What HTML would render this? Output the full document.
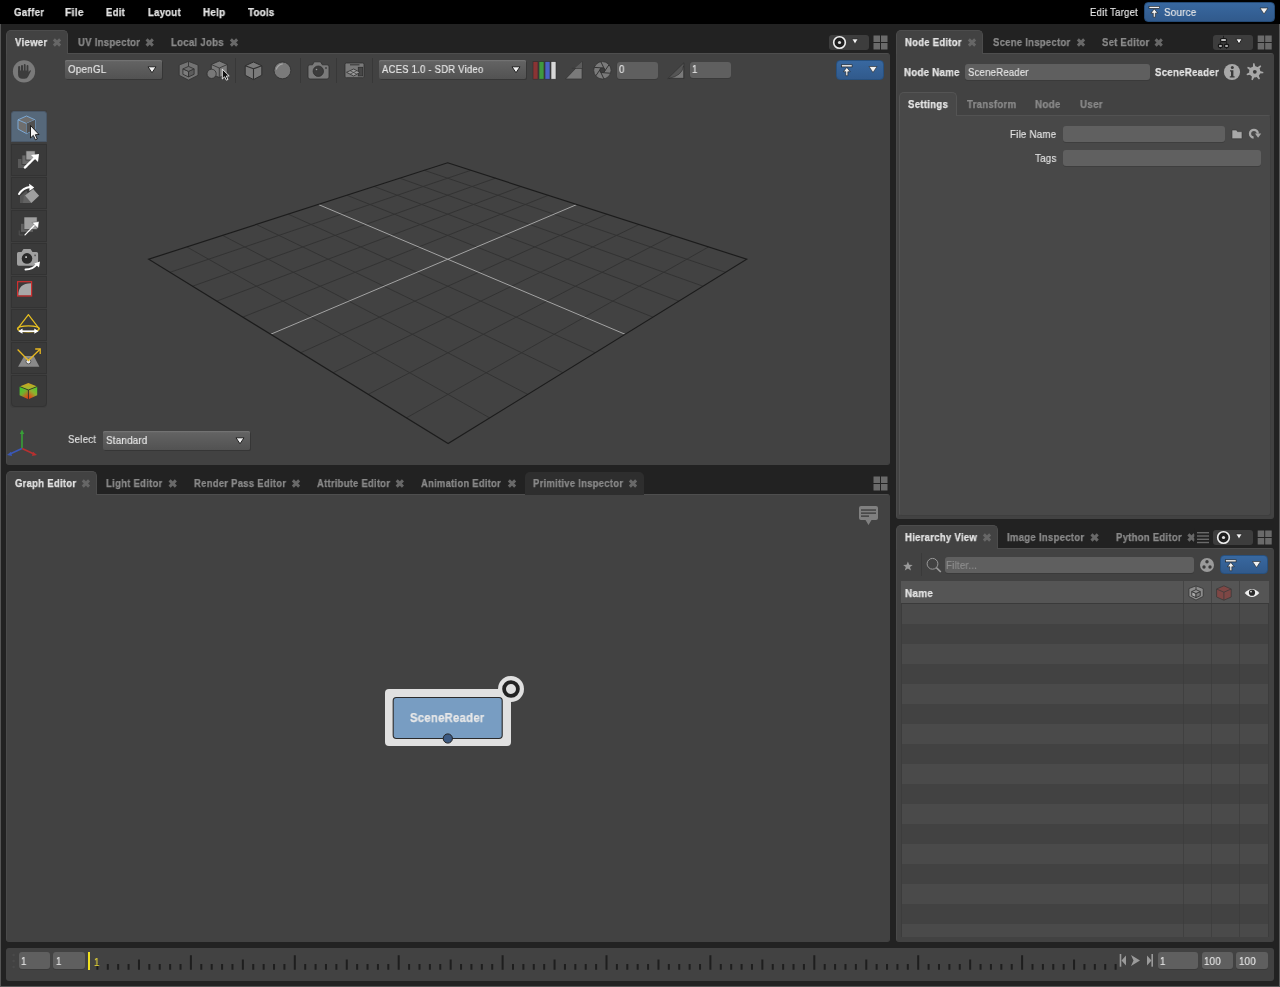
<!DOCTYPE html><html><head><meta charset="utf-8"><style>*{margin:0;padding:0;box-sizing:border-box}
html,body{width:1280px;height:987px;overflow:hidden;background:#222;font-family:"Liberation Sans",sans-serif}
div,svg{position:absolute}
.t{white-space:nowrap;will-change:transform}
</style></head><body><div style="left:0px;top:0px;width:1280px;height:24px;background:#000"></div>
<div style="left:0px;top:24px;width:1px;height:963px;background:#555"></div>
<div style="left:1279px;top:24px;width:1px;height:963px;background:#5a5a5a"></div>
<div style="left:0px;top:986px;width:1280px;height:1px;background:#5a5a5a"></div>
<div class="t" style="left:14.00px;top:5.19px;font-size:11px;line-height:14px;font-weight:bold;color:#e2e2e2;letter-spacing:0.3px;-webkit-text-stroke:0.25px #e2e2e2;transform:scaleX(0.8872);transform-origin:0 0;">Gaffer</div>
<div class="t" style="left:65.30px;top:5.19px;font-size:11px;line-height:14px;font-weight:bold;color:#e2e2e2;letter-spacing:0.3px;-webkit-text-stroke:0.25px #e2e2e2;transform:scaleX(0.9333);transform-origin:0 0;">File</div>
<div class="t" style="left:106.35px;top:5.19px;font-size:11px;line-height:14px;font-weight:bold;color:#e2e2e2;letter-spacing:0.3px;-webkit-text-stroke:0.25px #e2e2e2;transform:scaleX(0.8654);transform-origin:0 0;">Edit</div>
<div class="t" style="left:148.10px;top:5.19px;font-size:11px;line-height:14px;font-weight:bold;color:#e2e2e2;letter-spacing:0.3px;-webkit-text-stroke:0.25px #e2e2e2;transform:scaleX(0.8692);transform-origin:0 0;">Layout</div>
<div class="t" style="left:203.33px;top:5.19px;font-size:11px;line-height:14px;font-weight:bold;color:#e2e2e2;letter-spacing:0.3px;-webkit-text-stroke:0.25px #e2e2e2;transform:scaleX(0.8936);transform-origin:0 0;">Help</div>
<div class="t" style="left:247.91px;top:5.19px;font-size:11px;line-height:14px;font-weight:bold;color:#e2e2e2;letter-spacing:0.3px;-webkit-text-stroke:0.25px #e2e2e2;transform:scaleX(0.8834);transform-origin:0 0;">Tools</div>
<div class="t" style="left:1090.22px;top:4.79px;font-size:11px;line-height:14px;font-weight:normal;color:#e8e8e8;letter-spacing:0.25px;-webkit-text-stroke:0.18px #e8e8e8;transform:scaleX(0.8712);transform-origin:0 0;">Edit Target</div>
<div style="left:1144px;top:2px;width:131px;height:20px;background:linear-gradient(#3868a0,#315a8c);border-radius:4px;border:1px solid #244a75"></div>
<div class="t" style="left:1164.35px;top:4.79px;font-size:11px;line-height:14px;font-weight:normal;color:#e8e8e8;letter-spacing:0.25px;-webkit-text-stroke:0.18px #e8e8e8;transform:scaleX(0.8933);transform-origin:0 0;">Source</div>
<div style="left:6px;top:53px;width:884px;height:412px;background:#424242;border:1px solid #424242;border-left-color:#4a4a4a;border-top-color:#4e4e4e;border-radius:0 3px 3px 3px"></div>
<div style="left:6px;top:30px;width:62px;height:24px;background:#424242;border:1px solid #4c4c4c;border-bottom:none;border-radius:5px 5px 0 0"></div>
<div class="t" style="left:14.91px;top:35.19px;font-size:11px;line-height:14px;font-weight:bold;color:#e4e4e4;letter-spacing:0.3px;-webkit-text-stroke:0.25px #e4e4e4;transform:scaleX(0.8740);transform-origin:0 0;">Viewer</div>
<div class="t" style="left:77.83px;top:35.19px;font-size:11px;line-height:14px;font-weight:bold;color:#8a8a8a;letter-spacing:0.3px;-webkit-text-stroke:0.25px #8a8a8a;transform:scaleX(0.8720);transform-origin:0 0;">UV Inspector</div>
<div class="t" style="left:171.04px;top:35.19px;font-size:11px;line-height:14px;font-weight:bold;color:#8a8a8a;letter-spacing:0.3px;-webkit-text-stroke:0.25px #8a8a8a;transform:scaleX(0.8753);transform-origin:0 0;">Local Jobs</div>
<div style="left:829px;top:35px;width:40px;height:15px;background:#3d3d3d;border-radius:3px"></div>
<div style="left:65px;top:60px;width:97px;height:19px;background:linear-gradient(#6c6c6c,#626262 12%,#525252);border-radius:2px;box-shadow:1px 1px 0 #363636, inset 0 1px 0 #727272"></div>
<div class="t" style="left:67.65px;top:62.49px;font-size:11px;line-height:14px;font-weight:normal;color:#e6e6e6;letter-spacing:0.25px;-webkit-text-stroke:0.18px #e6e6e6;transform:scaleX(0.8915);transform-origin:0 0;">OpenGL</div>
<div style="left:379px;top:60px;width:147px;height:19px;background:linear-gradient(#6c6c6c,#626262 12%,#525252);border-radius:2px;box-shadow:1px 1px 0 #363636, inset 0 1px 0 #727272"></div>
<div class="t" style="left:381.96px;top:62.49px;font-size:11px;line-height:14px;font-weight:normal;color:#e6e6e6;letter-spacing:0.25px;-webkit-text-stroke:0.18px #e6e6e6;transform:scaleX(0.8649);transform-origin:0 0;">ACES 1.0 - SDR Video</div>
<div style="left:617px;top:61.6px;width:41px;height:17px;background:#5f5f5f;border-radius:3px;box-shadow:0 1px 0 #3a3a3a, -0.5px 0 0 #3c3c3c"></div>
<div class="t" style="left:619.20px;top:62.39px;font-size:11px;line-height:14px;font-weight:normal;color:#e6e6e6;letter-spacing:0.25px;-webkit-text-stroke:0.18px #e6e6e6;transform:scaleX(0.8800);transform-origin:0 0;">0</div>
<div style="left:690px;top:62px;width:41px;height:16px;background:#5f5f5f;border-radius:3px;box-shadow:0 1px 0 #3a3a3a, -0.5px 0 0 #3c3c3c"></div>
<div class="t" style="left:691.85px;top:62.39px;font-size:11px;line-height:14px;font-weight:normal;color:#e6e6e6;letter-spacing:0.25px;-webkit-text-stroke:0.18px #e6e6e6;transform:scaleX(0.8800);transform-origin:0 0;">1</div>
<div style="left:836px;top:60px;width:48px;height:20px;background:linear-gradient(#3868a0,#315a8c);border-radius:4px;border:1px solid #27507e"></div>
<div class="t" style="left:68.06px;top:432.19px;font-size:11px;line-height:14px;font-weight:normal;color:#e0e0e0;letter-spacing:0.25px;-webkit-text-stroke:0.18px #e0e0e0;transform:scaleX(0.8800);transform-origin:0 0;">Select</div>
<div style="left:103px;top:431px;width:147px;height:19px;background:linear-gradient(#6c6c6c,#626262 12%,#525252);border-radius:2px;box-shadow:1px 1px 0 #363636, inset 0 1px 0 #727272"></div>
<div class="t" style="left:105.66px;top:433.49px;font-size:11px;line-height:14px;font-weight:normal;color:#e6e6e6;letter-spacing:0.25px;-webkit-text-stroke:0.18px #e6e6e6;transform:scaleX(0.8894);transform-origin:0 0;">Standard</div>
<div style="left:10px;top:110px;width:37px;height:298px;background:#3e3e3e;border-radius:0 0 4px 4px"></div>
<div style="left:11px;top:111px;width:36px;height:31px;background:#56687a;border:1px solid #4a5868;border-radius:3px 3px 0 0"></div>
<div style="left:11px;top:144px;width:36px;height:32px;background:#3a3a3a;border:1px solid #333"></div>
<div style="left:11px;top:177px;width:36px;height:32px;background:#3a3a3a;border:1px solid #333"></div>
<div style="left:11px;top:210px;width:36px;height:32px;background:#3a3a3a;border:1px solid #333"></div>
<div style="left:11px;top:243px;width:36px;height:32px;background:#3a3a3a;border:1px solid #333"></div>
<div style="left:11px;top:276px;width:36px;height:32px;background:#3a3a3a;border:1px solid #333"></div>
<div style="left:11px;top:309px;width:36px;height:32px;background:#3a3a3a;border:1px solid #333"></div>
<div style="left:11px;top:342px;width:36px;height:32px;background:#3a3a3a;border:1px solid #333"></div>
<div style="left:11px;top:375px;width:36px;height:32px;background:#3a3a3a;border:1px solid #333;border-radius:0 0 4px 4px"></div>
<div style="left:6px;top:494px;width:884px;height:448px;background:#424242;border:1px solid #424242;border-left-color:#4a4a4a;border-top-color:#4e4e4e;border-radius:0 3px 3px 3px"></div>
<div style="left:525px;top:471.5px;width:119px;height:23px;background:#2e2e2e;border-radius:5px 5px 0 0"></div>
<div style="left:6px;top:471px;width:91px;height:24px;background:#424242;border:1px solid #4c4c4c;border-bottom:none;border-radius:5px 5px 0 0"></div>
<div class="t" style="left:14.71px;top:476.19px;font-size:11px;line-height:14px;font-weight:bold;color:#e4e4e4;letter-spacing:0.3px;-webkit-text-stroke:0.25px #e4e4e4;transform:scaleX(0.8655);transform-origin:0 0;">Graph Editor</div>
<div class="t" style="left:106.25px;top:476.19px;font-size:11px;line-height:14px;font-weight:bold;color:#8a8a8a;letter-spacing:0.3px;-webkit-text-stroke:0.25px #8a8a8a;transform:scaleX(0.8658);transform-origin:0 0;">Light Editor</div>
<div class="t" style="left:193.55px;top:476.19px;font-size:11px;line-height:14px;font-weight:bold;color:#8a8a8a;letter-spacing:0.3px;-webkit-text-stroke:0.25px #8a8a8a;transform:scaleX(0.8632);transform-origin:0 0;">Render Pass Editor</div>
<div class="t" style="left:317.14px;top:476.19px;font-size:11px;line-height:14px;font-weight:bold;color:#8a8a8a;letter-spacing:0.3px;-webkit-text-stroke:0.25px #8a8a8a;transform:scaleX(0.8560);transform-origin:0 0;">Attribute Editor</div>
<div class="t" style="left:421.34px;top:476.19px;font-size:11px;line-height:14px;font-weight:bold;color:#8a8a8a;letter-spacing:0.3px;-webkit-text-stroke:0.25px #8a8a8a;transform:scaleX(0.8570);transform-origin:0 0;">Animation Editor</div>
<div class="t" style="left:532.85px;top:476.19px;font-size:11px;line-height:14px;font-weight:bold;color:#8a8a8a;letter-spacing:0.3px;-webkit-text-stroke:0.25px #8a8a8a;transform:scaleX(0.8609);transform-origin:0 0;">Primitive Inspector</div>
<div style="left:896px;top:53px;width:378px;height:466px;background:#424242;border:1px solid #424242;border-left-color:#4a4a4a;border-top-color:#4e4e4e;border-radius:0 3px 3px 3px"></div>
<div style="left:896px;top:30px;width:87px;height:24px;background:#424242;border:1px solid #4c4c4c;border-bottom:none;border-radius:5px 5px 0 0"></div>
<div class="t" style="left:904.65px;top:35.19px;font-size:11px;line-height:14px;font-weight:bold;color:#e4e4e4;letter-spacing:0.3px;-webkit-text-stroke:0.25px #e4e4e4;transform:scaleX(0.8649);transform-origin:0 0;">Node Editor</div>
<div class="t" style="left:992.74px;top:35.19px;font-size:11px;line-height:14px;font-weight:bold;color:#8a8a8a;letter-spacing:0.3px;-webkit-text-stroke:0.25px #8a8a8a;transform:scaleX(0.8647);transform-origin:0 0;">Scene Inspector</div>
<div class="t" style="left:1101.64px;top:35.19px;font-size:11px;line-height:14px;font-weight:bold;color:#8a8a8a;letter-spacing:0.3px;-webkit-text-stroke:0.25px #8a8a8a;transform:scaleX(0.8661);transform-origin:0 0;">Set Editor</div>
<div style="left:1213px;top:35px;width:40px;height:15px;background:#3d3d3d;border-radius:3px"></div>
<div class="t" style="left:904.34px;top:64.99px;font-size:11px;line-height:14px;font-weight:bold;color:#e4e4e4;letter-spacing:0.3px;-webkit-text-stroke:0.25px #e4e4e4;transform:scaleX(0.8819);transform-origin:0 0;">Node Name</div>
<div style="left:965.3px;top:63.6px;width:184.7px;height:16.4px;background:#5f5f5f;border-radius:3px;box-shadow:0 1px 0 #3a3a3a"></div>
<div class="t" style="left:967.57px;top:65.19px;font-size:11px;line-height:14px;font-weight:normal;color:#e6e6e6;letter-spacing:0.25px;-webkit-text-stroke:0.18px #e6e6e6;transform:scaleX(0.8683);transform-origin:0 0;">SceneReader</div>
<div class="t" style="left:1154.74px;top:64.99px;font-size:11px;line-height:14px;font-weight:bold;color:#e4e4e4;letter-spacing:0.3px;-webkit-text-stroke:0.25px #e4e4e4;transform:scaleX(0.8761);transform-origin:0 0;">SceneReader</div>
<div style="left:899px;top:115px;width:372px;height:401px;background:#484848;border:1px solid #525252;border-right-color:#3e3e3e;border-bottom-color:#3e3e3e;border-radius:0 3px 3px 3px"></div>
<div style="left:899px;top:92px;width:58px;height:24px;background:#484848;border:1px solid #545454;border-bottom:none;border-radius:5px 5px 0 0"></div>
<div class="t" style="left:907.74px;top:96.99px;font-size:11px;line-height:14px;font-weight:bold;color:#e6e6e6;letter-spacing:0.3px;-webkit-text-stroke:0.25px #e6e6e6;transform:scaleX(0.8760);transform-origin:0 0;">Settings</div>
<div class="t" style="left:966.81px;top:96.99px;font-size:11px;line-height:14px;font-weight:bold;color:#8a8a8a;letter-spacing:0.3px;-webkit-text-stroke:0.25px #8a8a8a;transform:scaleX(0.8736);transform-origin:0 0;">Transform</div>
<div class="t" style="left:1034.93px;top:96.99px;font-size:11px;line-height:14px;font-weight:bold;color:#8a8a8a;letter-spacing:0.3px;-webkit-text-stroke:0.25px #8a8a8a;transform:scaleX(0.8938);transform-origin:0 0;">Node</div>
<div class="t" style="left:1080.02px;top:96.99px;font-size:11px;line-height:14px;font-weight:bold;color:#8a8a8a;letter-spacing:0.3px;-webkit-text-stroke:0.25px #8a8a8a;transform:scaleX(0.8921);transform-origin:0 0;">User</div>
<div class="t" style="left:1009.70px;top:127.19px;font-size:11px;line-height:14px;font-weight:normal;color:#e2e2e2;letter-spacing:0.25px;-webkit-text-stroke:0.18px #e2e2e2;transform:scaleX(0.8847);transform-origin:0 0;">File Name</div>
<div style="left:1062.8px;top:125.5px;width:162.2px;height:16.4px;background:#606060;border-radius:3px;box-shadow:0 1px 0 #3e3e3e"></div>
<div class="t" style="left:1034.78px;top:150.79px;font-size:11px;line-height:14px;font-weight:normal;color:#e2e2e2;letter-spacing:0.25px;-webkit-text-stroke:0.18px #e2e2e2;transform:scaleX(0.8908);transform-origin:0 0;">Tags</div>
<div style="left:1062.8px;top:149.5px;width:198.2px;height:16.5px;background:#606060;border-radius:3px;box-shadow:0 1px 0 #3e3e3e"></div>
<div style="left:896px;top:548px;width:378px;height:394px;background:#424242;border:1px solid #424242;border-left-color:#4a4a4a;border-top-color:#4e4e4e;border-radius:0 3px 3px 3px"></div>
<div style="left:896px;top:525px;width:102px;height:24px;background:#424242;border:1px solid #4c4c4c;border-bottom:none;border-radius:5px 5px 0 0"></div>
<div class="t" style="left:904.55px;top:530.49px;font-size:11px;line-height:14px;font-weight:bold;color:#e4e4e4;letter-spacing:0.3px;-webkit-text-stroke:0.25px #e4e4e4;transform:scaleX(0.8704);transform-origin:0 0;">Hierarchy View</div>
<div class="t" style="left:1007.35px;top:530.49px;font-size:11px;line-height:14px;font-weight:bold;color:#8a8a8a;letter-spacing:0.3px;-webkit-text-stroke:0.25px #8a8a8a;transform:scaleX(0.8705);transform-origin:0 0;">Image Inspector</div>
<div class="t" style="left:1115.55px;top:530.49px;font-size:11px;line-height:14px;font-weight:bold;color:#8a8a8a;letter-spacing:0.3px;-webkit-text-stroke:0.25px #8a8a8a;transform:scaleX(0.8663);transform-origin:0 0;">Python Editor</div>
<div style="left:1213px;top:530px;width:40px;height:15px;background:#3d3d3d;border-radius:3px"></div>
<div style="left:944.7px;top:556.5px;width:249px;height:16.5px;background:#5f5f5f;border-radius:3px;box-shadow:0 1px 0 #3a3a3a"></div>
<div class="t" style="left:946.41px;top:558.49px;font-size:11px;line-height:14px;font-weight:normal;color:#8e8e8e;letter-spacing:0.25px;-webkit-text-stroke:0.18px #8e8e8e;transform:scaleX(0.8822);transform-origin:0 0;">Filter...</div>
<div style="left:1220px;top:555.3px;width:47.6px;height:19.2px;background:linear-gradient(#3868a0,#315a8c);border-radius:4px;border:1px solid #27507e"></div>
<div style="left:901px;top:581px;width:368px;height:356px;background:#424242;border:1px solid #3c3c3c"></div>
<div style="left:901px;top:581px;width:368px;height:23px;background:#555555;border-bottom:1px solid #3a3a3a"></div>
<div style="left:902px;top:603.5px;width:366px;height:20px;background:#4a4a4a"></div>
<div style="left:902px;top:643.5px;width:366px;height:20px;background:#4a4a4a"></div>
<div style="left:902px;top:683.5px;width:366px;height:20px;background:#4a4a4a"></div>
<div style="left:902px;top:723.5px;width:366px;height:20px;background:#4a4a4a"></div>
<div style="left:902px;top:763.5px;width:366px;height:20px;background:#4a4a4a"></div>
<div style="left:902px;top:803.5px;width:366px;height:20px;background:#4a4a4a"></div>
<div style="left:902px;top:843.5px;width:366px;height:20px;background:#4a4a4a"></div>
<div style="left:902px;top:883.5px;width:366px;height:20px;background:#4a4a4a"></div>
<div style="left:902px;top:923.5px;width:366px;height:13.600000000000023px;background:#4a4a4a"></div>
<div style="left:1182.9px;top:581px;width:1px;height:356px;background:#3a3a3a;opacity:0.6"></div>
<div style="left:1211.0px;top:581px;width:1px;height:356px;background:#3a3a3a;opacity:0.6"></div>
<div style="left:1238.9px;top:581px;width:1px;height:356px;background:#3a3a3a;opacity:0.6"></div>
<div class="t" style="left:905.32px;top:586.19px;font-size:11px;line-height:14px;font-weight:bold;color:#e4e4e4;letter-spacing:0.3px;-webkit-text-stroke:0.25px #e4e4e4;transform:scaleX(0.9008);transform-origin:0 0;">Name</div>
<div style="left:6px;top:948px;width:1268px;height:33px;background:#424242;border-radius:3px"></div>
<div style="left:18.7px;top:952.2px;width:31px;height:16.8px;background:#5f5f5f;border-radius:3px;box-shadow:0 1px 0 #3a3a3a"></div>
<div class="t" style="left:20.95px;top:953.89px;font-size:11px;line-height:14px;font-weight:normal;color:#e6e6e6;letter-spacing:0.25px;-webkit-text-stroke:0.18px #e6e6e6;transform:scaleX(0.8800);transform-origin:0 0;">1</div>
<div style="left:53.4px;top:952.2px;width:31.4px;height:16.8px;background:#5f5f5f;border-radius:3px;box-shadow:0 1px 0 #3a3a3a"></div>
<div class="t" style="left:55.65px;top:953.89px;font-size:11px;line-height:14px;font-weight:normal;color:#e6e6e6;letter-spacing:0.25px;-webkit-text-stroke:0.18px #e6e6e6;transform:scaleX(0.8800);transform-origin:0 0;">1</div>
<div style="left:87.6px;top:951.7px;width:2.6px;height:18.3px;background:#f0e020"></div>
<div style="left:1157.7px;top:952.4px;width:40px;height:16.4px;background:#5f5f5f;border-radius:3px;box-shadow:0 1px 0 #3a3a3a"></div>
<div class="t" style="left:1159.95px;top:954.09px;font-size:11px;line-height:14px;font-weight:normal;color:#e6e6e6;letter-spacing:0.25px;-webkit-text-stroke:0.18px #e6e6e6;transform:scaleX(0.8800);transform-origin:0 0;">1</div>
<div style="left:1201.5px;top:952.4px;width:31.5px;height:16.4px;background:#5f5f5f;border-radius:3px;box-shadow:0 1px 0 #3a3a3a"></div>
<div class="t" style="left:1203.75px;top:954.09px;font-size:11px;line-height:14px;font-weight:normal;color:#e6e6e6;letter-spacing:0.25px;-webkit-text-stroke:0.18px #e6e6e6;transform:scaleX(0.8864);transform-origin:0 0;">100</div>
<div style="left:1236.4px;top:952.4px;width:31.6px;height:16.4px;background:#5f5f5f;border-radius:3px;box-shadow:0 1px 0 #3a3a3a"></div>
<div class="t" style="left:1238.65px;top:954.09px;font-size:11px;line-height:14px;font-weight:normal;color:#e6e6e6;letter-spacing:0.25px;-webkit-text-stroke:0.18px #e6e6e6;transform:scaleX(0.8864);transform-origin:0 0;">100</div><svg style="left:0;top:0" width="1280" height="987"><g transform="translate(1149,6)" fill="#f4f4f4" stroke="#151515" stroke-width="0.6"><rect x="0" y="0.3" width="10.6" height="2.1"/><path d="M5.3 2.9 L8.7 7.2 H6.3 V11.2 H4.3 V7.2 H1.9 Z"/></g><path d="M1260 8 H1268 L1264.0 14 Z" fill="#f2f2f2" stroke="#222" stroke-width="0.6" stroke-linejoin="round"/><path d="M53.85 39.35L60.15 45.65M60.15 39.35L53.85 45.65" stroke="#666666" stroke-width="2.9"/><path d="M146.54999999999998 39.35L152.85 45.65M152.85 39.35L146.54999999999998 45.65" stroke="#686868" stroke-width="2.9"/><path d="M230.85 39.35L237.15 45.65M237.15 39.35L230.85 45.65" stroke="#686868" stroke-width="2.9"/><circle cx="839.5" cy="42.5" r="5.8" fill="#1e1e1e" stroke="#f0f0f0" stroke-width="1.6"/><circle cx="839.5" cy="42.5" r="1.6" fill="#e0e0e0"/><path d="M852 39 H858 L855.0 44 Z" fill="#f2f2f2" stroke="#222" stroke-width="0.6" stroke-linejoin="round"/><g fill="#6a6a6a"><rect x="873.5" y="35.5" width="6.5" height="6.5"/><rect x="881.0" y="35.5" width="6.5" height="6.5"/><rect x="873.5" y="43.0" width="6.5" height="6.5"/><rect x="881.0" y="43.0" width="6.5" height="6.5"/></g><circle cx="24" cy="71.4" r="11.1" fill="#7a7a7a"/><g fill="#3c3c3c"><rect x="18.1" y="66" width="2.1" height="7" rx="1"/><rect x="21" y="65" width="2" height="7" rx="1"/><rect x="23.8" y="64" width="1.8" height="8" rx="0.9"/><rect x="26.6" y="65" width="1.8" height="8" rx="0.9"/><path d="M18.1 70.5 H28.4 V72.6 L29.8 70.6 Q30.6 69.9 31 70.8 L28.3 76.2 Q27.2 78.8 24.5 78.8 H22.2 Q18.6 78.8 18.1 75 Z"/></g><path d="M148 66.8 H156 L152.0 72.8 Z" fill="#f2f2f2" stroke="#222" stroke-width="1" stroke-linejoin="round"/><path d="M235.5 58V83" stroke="#383838" stroke-width="1"/><path d="M300.5 58V83" stroke="#383838" stroke-width="1"/><path d="M336.5 58V83" stroke="#383838" stroke-width="1"/><path d="M372.5 58V83" stroke="#383838" stroke-width="1"/><path d="M179.20 65.00 L188.50 61.40 L198.00 65.00 V75.30 L188.50 80.10 L179.20 75.30 Z" fill="#737373" stroke="#333" stroke-width="0.8" stroke-linejoin="round"/><path d="M188.50 61.60 V66.60" stroke="#333" stroke-width="0.9"/><path d="M182.90 68.90 L188.50 71.40 V76.90 L182.90 74.30 Z" fill="#7c7c7c" stroke="#333" stroke-width="0.9" stroke-linejoin="round"/><path d="M194.10 68.90 L188.50 71.40 V76.90 L194.10 74.30 Z" fill="#5c5c5c" stroke="#333" stroke-width="0.9" stroke-linejoin="round"/><path d="M182.90 68.90 L188.50 66.40 L194.10 68.90 L188.50 71.40 Z" fill="#6e6e6e" stroke="#333" stroke-width="0.9" stroke-linejoin="round"/><g stroke="#2e2e2e" stroke-width="0.8" stroke-linejoin="round"><path d="M219.3 61 L227.3 64.5 V74 L219.3 77.5 L211.3 74 V64.5 Z" fill="#7a7a7a"/><path d="M211.3 64.5 L219.3 68 L227.3 64.5 M219.3 68 V77.5" fill="none"/><circle cx="211.6" cy="73.8" r="4.6" fill="#787878"/></g><path d="M222.3 69.2 V79 L224.6 76.8 L226.4 80.2 L228 79.4 L226.3 76.1 L229.2 75.9 Z" fill="#111" stroke="#f0f0f0" stroke-width="0.9" stroke-linejoin="round"/><g stroke="#2e2e2e" stroke-width="1" stroke-linejoin="round"><path d="M253.5 62 L261.8 65.8 V75.2 L253.5 79.6 L245.2 75.2 V65.8 Z" fill="#7a7a7a"/><path d="M245.2 65.8 L253.5 68.8 L261.8 65.8 M253.5 68.8 V79.6" fill="none" stroke-width="1.1"/></g><circle cx="282.4" cy="70.4" r="8.4" fill="#7a7a7a" stroke="#2e2e2e" stroke-width="0.8"/><path d="M276.2 69.5 q1.5-4.8 6.5-5.6" stroke="#a8a8a8" stroke-width="1.2" fill="none"/><g stroke="#2e2e2e" stroke-width="0.8"><path d="M312.5 64.8 L314.2 61.8 H320.5 L322.3 64.8 H327 Q329 64.8 329 66.8 V77 Q329 79 327 79 H310 Q308 79 308 77 V66.8 Q308 64.8 310 64.8 Z" fill="#7a7a7a"/><circle cx="318.3" cy="71.2" r="5.2" fill="#3c3c3c"/><rect x="325.2" y="67.2" width="1.6" height="1.6" fill="#3c3c3c" stroke="none"/></g><circle cx="316.5" cy="69.5" r="0.8" fill="#9a9a9a"/><g stroke="#2e2e2e" stroke-width="0.8"><rect x="345" y="63" width="19" height="14.7" rx="1.5" fill="#7a7a7a"/><rect x="350" y="64.2" width="9.5" height="1.2" fill="#3c3c3c" stroke="none"/><rect x="358.3" y="67.3" width="4.4" height="8.6" fill="#474747"/><path d="M346.5 72.3 L353.7 69 L360 72.3 L353.7 76 Z" fill="#9a9a9a"/><path d="M350.1 70.7 L356.9 74.2 M350.1 74.2 L356.9 70.7" fill="none" stroke="#3c3c3c" stroke-width="0.7"/></g><path d="M512 66.8 H520 L516.0 72.8 Z" fill="#f2f2f2" stroke="#222" stroke-width="1" stroke-linejoin="round"/><g stroke="#2e2e2e" stroke-width="0.6"><rect x="533" y="61.6" width="5" height="17.6" fill="#8a3434"/><rect x="539" y="61.6" width="5" height="17.6" fill="#3f993f"/><rect x="545" y="61.6" width="5" height="17.6" fill="#4a62c4"/><rect x="551" y="61.6" width="5" height="17.6" fill="#d8d8d8"/></g><path d="M565.6 78.9 L582 61.8 V78.9 Z" fill="#7a7a7a" stroke="#2e2e2e" stroke-width="0.6"/><path d="M571.8 68.3 H582.4" stroke="#3a3a3a" stroke-width="1"/><path d="M575 68 L582 61.8 V68 Z" fill="#5c5c5c"/><circle cx="602.4" cy="70.3" r="8.7" fill="#7a7a7a" stroke="#2e2e2e" stroke-width="0.7"/><circle cx="602.4" cy="70.3" r="2.8" fill="#3c3c3c"/><path d="M610.48 73.24L601.10 72.55M603.89 78.77L599.80 70.30M595.81 75.83L601.10 68.05M594.32 67.36L603.70 68.05M600.91 61.83L605.00 70.30M608.99 64.77L603.70 72.55" stroke="#333" stroke-width="1"/><path d="M667.8 78.5 L683.9 62.8 V78.5 Z" fill="#555" stroke="#2e2e2e" stroke-width="0.6"/><path d="M669 78.3 Q682 76 683.6 66 V78.3 Z" fill="#7a7a7a" stroke="#2e2e2e" stroke-width="0.6"/><g transform="translate(841.5,64.5)" fill="#f4f4f4" stroke="#151515" stroke-width="0.6"><rect x="0" y="0.3" width="10.6" height="2.1"/><path d="M5.3 2.9 L8.7 7.2 H6.3 V11.2 H4.3 V7.2 H1.9 Z"/></g><path d="M869 66.5 H877 L873.0 72.5 Z" fill="#f2f2f2" stroke="#222" stroke-width="0.6" stroke-linejoin="round"/><path d="M470.9 170.3L170.0 272.3M424.3 170.3L725.5 272.3M495.4 178.2L192.6 286.2M399.8 178.2L703.0 286.2M521.2 186.5L216.8 301.1M374.1 186.5L678.8 301.1M548.3 195.3L242.8 317.1M347.0 195.3L652.9 317.1M607.1 214.2L300.6 352.8M288.3 214.2L595.2 352.8M639.0 224.5L333.1 372.7M256.4 224.5L562.9 372.7M672.8 235.4L368.2 394.4M222.6 235.4L527.8 394.4M708.6 246.9L406.4 417.9M186.8 246.9L489.7 417.9" stroke="#333333" stroke-width="1" fill="none"/><path d="M576.9 204.5L270.6 334.3M318.4 204.5L625.2 334.3" stroke="#a9a9a9" stroke-width="0.95" fill="none"/><path d="M447.6 162.8L746.7 259.2L448.1 443.6L148.7 259.2Z" stroke="#1c1c1c" stroke-width="1.2" fill="none"/><path d="M22 448.5 V433" stroke="#38a038" stroke-width="1.6"/><path d="M19.8 434 L22 429.5 L24.2 434 Z" fill="#38a038"/><path d="M22 448.5 L34 454" stroke="#b83030" stroke-width="1.6"/><path d="M33 451.8 L37 455 L32 456 Z" fill="#b83030"/><path d="M22 448.5 L10 454" stroke="#3a58b8" stroke-width="1.6"/><path d="M11 451.8 L7 455 L12 456 Z" fill="#3a58b8"/><path d="M236 437.8 H244 L240.0 443.8 Z" fill="#f2f2f2" stroke="#222" stroke-width="1" stroke-linejoin="round"/><g stroke="#7fb0e0" stroke-width="0.9" stroke-linejoin="round"><path d="M26.5 116 L35 119.8 V129 L26.5 133.6 L18 129 V119.8 Z" fill="#6e6e6e"/><path d="M18 119.8 L26.5 123.5 L35 119.8 M26.5 123.5 V133.6" fill="none"/></g><path d="M26.5 123.5 L35 119.8 V129 L26.5 133.6 Z" fill="#505050"/><path d="M30.5 125.5 V138 L33.3 135.4 L35.4 139.8 L37.3 139 L35.3 134.7 L39 134.5 Z" fill="#f4f4f4" stroke="#111" stroke-width="0.9" stroke-linejoin="round"/><rect x="18" y="159" width="9.5" height="9" fill="#5a5a5a"/><rect x="21.9" y="155" width="9.2" height="9.5" fill="#6a6a6a" stroke="#3a3a3a" stroke-width="0.8"/><rect x="25.9" y="150.8" width="9.3" height="9.2" fill="#a0a0a0" stroke="#3a3a3a" stroke-width="0.8"/><path d="M24.8 167.6 L35 157.5" stroke="#fff" stroke-width="2.2" stroke-linecap="round"/><path d="M31 155 L39 154 L38 162 Z" fill="#fff"/><path d="M20 203 V196 L26.5 190.5 L31.4 203 Z" fill="#555"/><path d="M23 203 L24 194 L31.4 203 Z" fill="#626262"/><path d="M33.1 189 L39.1 195.7 L31.4 203.1 L25 195.4 Z" fill="#a0a0a0"/><path d="M19 194 Q23 187.8 30 187" stroke="#fff" stroke-width="2" fill="none" stroke-linecap="round"/><path d="M29.2 183.8 L34.2 187.6 L29.5 191 Z" fill="#fff"/><path d="M19.2 235 V230.5 M19.2 235 H23" stroke="#555" stroke-width="0.9" fill="none"/><rect x="21" y="223.8" width="12" height="8.1" fill="#606060"/><rect x="24" y="217" width="13.1" height="12.5" fill="#a0a0a0" stroke="#3a3a3a" stroke-width="0.6"/><path d="M25 234.9 L36 223.8" stroke="#fff" stroke-width="1.3" stroke-linecap="round"/><path d="M32 222.5 L39.1 221.5 L38 228.5 Z" fill="#fff" stroke="#3a3a3a" stroke-width="0.4"/><path d="M21.5 252 L23.5 249 H30.5 L32.5 252 H36.5 Q38.1 252 38.1 253.6 V264 Q38.1 265.7 36.5 265.7 H18.6 Q17 265.7 17 264 V253.6 Q17 252 18.6 252 Z" fill="#a0a0a0"/><circle cx="27" cy="258.4" r="5.3" fill="#2a2a2a"/><rect x="25.3" y="256.3" width="1.6" height="1.6" fill="#ddd"/><rect x="34.3" y="254.6" width="1.6" height="1.6" fill="#555"/><path d="M25.5 269.5 Q33 269.5 37 264" stroke="#fff" stroke-width="2" fill="none" stroke-linecap="round"/><path d="M34.3 263.5 L40 261.5 L39 267.5 Z" fill="#fff"/><path d="M18.2 295.6 Q18.2 283.3 31 283.3 V295.6 Z" fill="#a8a8a8"/><rect x="17.6" y="281.7" width="14" height="14.3" fill="none" stroke="#d03030" stroke-width="1.2"/><path d="M17.5 328.8 L28.4 314.6 L39.3 328.8" stroke="#e8c020" stroke-width="1.2" fill="none" stroke-linejoin="round"/><ellipse cx="28.4" cy="328.8" rx="10.9" ry="3" fill="none" stroke="#e8c020" stroke-width="1.3"/><path d="M21 331.2 H36" stroke="#fff" stroke-width="1.6"/><path d="M18.3 331.2 L22.5 328.6 V333.8 Z M38.5 331.2 L34.3 328.6 V333.8 Z" fill="#fff"/><path d="M24.2 356 H33.8 L39.4 366.8 H18.1 Z" fill="#8a8a8a"/><circle cx="28.4" cy="361.5" r="2.4" fill="#e8e8e8" stroke="#444" stroke-width="0.8"/><path d="M17.6 349.5 L28.4 360.5 L40 349.2" stroke="#e8b820" stroke-width="1.3" fill="none"/><path d="M35.2 349 H40.2 V354" stroke="#e8b820" stroke-width="1.3" fill="none"/><defs><linearGradient id="cgl" x1="0" y1="0" x2="0.6" y2="1"><stop offset="0" stop-color="#30d030"/><stop offset="0.55" stop-color="#70b030"/><stop offset="1" stop-color="#e04818"/></linearGradient><linearGradient id="cgr" x1="1" y1="0" x2="0.4" y2="1"><stop offset="0" stop-color="#40d030"/><stop offset="0.55" stop-color="#90b030"/><stop offset="1" stop-color="#e04818"/></linearGradient><linearGradient id="cgt" x1="0" y1="0" x2="0" y2="1"><stop offset="0" stop-color="#d0a020"/><stop offset="1" stop-color="#90c030"/></linearGradient></defs><path d="M19.6 386.5 L28.4 390 V399.2 L19.6 395.3 Z" fill="url(#cgl)"/><path d="M37.2 386.5 L28.4 390 V399.2 L37.2 395.3 Z" fill="url(#cgr)"/><path d="M19.6 386.5 L28.4 383 L37.2 386.5 L28.4 390 Z" fill="url(#cgt)"/><path d="M19.6 386.5 L28.4 390 L37.2 386.5 M28.4 390 V399.2" stroke="#2a2a2a" stroke-width="0.8" fill="none"/><path d="M82.75 480.35L89.05000000000001 486.65M89.05000000000001 480.35L82.75 486.65" stroke="#666666" stroke-width="2.9"/><path d="M169.54999999999998 480.35L175.85 486.65M175.85 480.35L169.54999999999998 486.65" stroke="#686868" stroke-width="2.9"/><path d="M292.85 480.35L299.15 486.65M299.15 480.35L292.85 486.65" stroke="#686868" stroke-width="2.9"/><path d="M396.65000000000003 480.35L402.95 486.65M402.95 480.35L396.65000000000003 486.65" stroke="#686868" stroke-width="2.9"/><path d="M508.85 480.35L515.15 486.65M515.15 480.35L508.85 486.65" stroke="#686868" stroke-width="2.9"/><path d="M629.85 480.35L636.15 486.65M636.15 480.35L629.85 486.65" stroke="#686868" stroke-width="2.9"/><g fill="#6a6a6a"><rect x="873.5" y="476.5" width="6.5" height="6.5"/><rect x="881.0" y="476.5" width="6.5" height="6.5"/><rect x="873.5" y="484.0" width="6.5" height="6.5"/><rect x="881.0" y="484.0" width="6.5" height="6.5"/></g><path d="M861 506 H876 Q878 506 878 508 V518 Q878 520 876 520 H871.5 L868.5 525 L865.5 520 H861 Q859 520 859 518 V508 Q859 506 861 506 Z" fill="#808080"/><g fill="#4a4a4a"><rect x="861" y="509.2" width="15" height="1.7"/><rect x="861" y="512.3" width="15" height="1.7"/><rect x="861" y="515.3" width="8" height="1.7"/></g><path d="M389 689 H511 V742 Q511 746 507 746 H389 Q385 746 385 742 V693 Q385 689 389 689 Z" fill="#e0e0e0"/><circle cx="511" cy="689" r="13" fill="#e0e0e0"/><circle cx="511" cy="689" r="6.9" fill="none" stroke="#222" stroke-width="3.8"/><rect x="393.2" y="697.5" width="109" height="41" rx="3.2" fill="#789dc2" stroke="#2a2a2a" stroke-width="1.1"/><circle cx="447.8" cy="738.5" r="4.6" fill="#3d5a82" stroke="#222" stroke-width="1"/><path d="M968.85 39.35L975.15 45.65M975.15 39.35L968.85 45.65" stroke="#666666" stroke-width="2.9"/><path d="M1077.85 39.35L1084.15 45.65M1084.15 39.35L1077.85 45.65" stroke="#686868" stroke-width="2.9"/><path d="M1155.55 39.35L1161.8500000000001 45.65M1161.8500000000001 39.35L1155.55 45.65" stroke="#686868" stroke-width="2.9"/><path d="M1223.5 35.8V38.5M1220.4 42L1220.4 44.3M1226.6 42V44.3M1220.4 47.6V49M1226.6 47.6V49" stroke="#151515" stroke-width="0.8" fill="none"/><g stroke="#151515" stroke-width="1.3"><rect x="1220.6" y="38.6" width="5.9" height="2.9" rx="1" fill="#f4f4f4"/><rect x="1218.5" y="44.5" width="3.9" height="2.9" rx="0.8" fill="#d8d8d8"/><rect x="1224.6" y="44.5" width="3.9" height="2.9" rx="0.8" fill="#d8d8d8"/></g><path d="M1235.8 38.8 H1242.2 L1239.0 44.0 Z" fill="#f2f2f2" stroke="#222" stroke-width="1" stroke-linejoin="round"/><g fill="#6a6a6a"><rect x="1257.7" y="35.5" width="6.5" height="6.5"/><rect x="1265.2" y="35.5" width="6.5" height="6.5"/><rect x="1257.7" y="43.0" width="6.5" height="6.5"/><rect x="1265.2" y="43.0" width="6.5" height="6.5"/></g><circle cx="1232" cy="72" r="8.1" fill="#a8a8a8"/><circle cx="1232.3" cy="67.6" r="1.5" fill="#3a3a3a"/><path d="M1230 70.2 H1233.4 V76.2 H1234.6 V77.4 H1229.8 V76.2 H1231 V71.4 H1230 Z" fill="#3a3a3a"/><path d="M1252.94 66.95 L1253.09 63.37 L1254.42 63.21 L1255.43 66.64 L1257.43 67.32 L1260.32 65.21 L1261.28 66.15 L1259.23 69.08 L1259.95 71.06 L1263.40 72.00 L1263.26 73.35 L1259.69 73.57 L1258.59 75.37 L1260.00 78.65 L1258.87 79.38 L1256.47 76.73 L1254.37 76.98 L1252.69 80.14 L1251.41 79.70 L1251.99 76.18 L1250.48 74.70 L1246.97 75.35 L1246.51 74.08 L1249.63 72.33 L1249.84 70.23 L1247.14 67.89 L1247.85 66.74 L1251.16 68.09 Z" fill="#a8a8a8"/><circle cx="1254.8" cy="71.8" r="5.6" fill="#a8a8a8"/><circle cx="1254.8" cy="71.8" r="1.9" fill="#3a3a3a"/><path d="M1232 130 H1236.5 L1237.5 131.6 H1242 V138.7 H1232 Z" fill="#a8a8a8" stroke="#333" stroke-width="0.6"/><path d="M1253.6 137.6 A3.9 3.9 0 1 1 1257.8 133.6" stroke="#a8a8a8" stroke-width="2.3" fill="none"/><path d="M1255 133.4 L1261.2 133.4 L1258.1 137.8 Z" fill="#a8a8a8"/><path d="M983.85 534.35L990.15 540.65M990.15 534.35L983.85 540.65" stroke="#666666" stroke-width="2.9"/><path d="M1091.4499999999998 534.35L1097.75 540.65M1097.75 534.35L1091.4499999999998 540.65" stroke="#686868" stroke-width="2.9"/><path d="M1188.35 534.35L1194.65 540.65M1194.65 534.35L1188.35 540.65" stroke="#686868" stroke-width="2.9"/><rect x="1194.3" y="528" width="2.7" height="18" fill="#222"/><g fill="#6a6a6a"><rect x="1197" y="532" width="12" height="1.4"/><rect x="1197" y="535.3" width="12" height="1.4"/><rect x="1197" y="538.6" width="12" height="1.4"/><rect x="1197" y="541.8" width="12" height="1.4"/></g><circle cx="1223.5" cy="537.5" r="5.8" fill="#1e1e1e" stroke="#f0f0f0" stroke-width="1.6"/><circle cx="1223.5" cy="537.5" r="1.6" fill="#e0e0e0"/><path d="M1236 534 H1242 L1239.0 539 Z" fill="#f2f2f2" stroke="#222" stroke-width="0.6" stroke-linejoin="round"/><g fill="#6a6a6a"><rect x="1257.7" y="530.5" width="6.5" height="6.5"/><rect x="1265.2" y="530.5" width="6.5" height="6.5"/><rect x="1257.7" y="538.0" width="6.5" height="6.5"/><rect x="1265.2" y="538.0" width="6.5" height="6.5"/></g><path d="M907.9 561.4 L909.2 564.8 L912.7 564.9 L910 567.1 L911 570.5 L907.9 568.5 L904.8 570.5 L905.8 567.1 L903.1 564.9 L906.6 564.8 Z" fill="#9a9a9a"/><path d="M921.5 553V576" stroke="#3a3a3a"/><circle cx="932.5" cy="563.8" r="5.4" fill="none" stroke="#9a9a9a" stroke-width="1"/><path d="M936.3 567.6 L940.8 572" stroke="#9a9a9a" stroke-width="1.6"/><circle cx="1207" cy="565" r="7" fill="#9a9a9a"/><g fill="#3a3a3a"><circle cx="1207" cy="561.8" r="1.7"/><circle cx="1204" cy="567" r="1.7"/><circle cx="1210" cy="567" r="1.7"/></g><g transform="translate(1225.5,559.5)" fill="#f4f4f4" stroke="#151515" stroke-width="0.6"><rect x="0" y="0.3" width="10.6" height="2.1"/><path d="M5.3 2.9 L8.7 7.2 H6.3 V11.2 H4.3 V7.2 H1.9 Z"/></g><path d="M1252.5 561.5 H1260.5 L1256.5 567.5 Z" fill="#f2f2f2" stroke="#222" stroke-width="0.6" stroke-linejoin="round"/><path d="M1188.93 588.59 L1196.00 585.86 L1203.22 588.59 V596.42 L1196.00 600.07 L1188.93 596.42 Z" fill="#8c8c8c" stroke="#333" stroke-width="0.8" stroke-linejoin="round"/><path d="M1196.00 586.01 V589.81" stroke="#333" stroke-width="0.9"/><path d="M1191.74 591.56 L1196.00 593.46 V597.64 L1191.74 595.66 Z" fill="#a8a8a8" stroke="#333" stroke-width="0.9" stroke-linejoin="round"/><path d="M1200.26 591.56 L1196.00 593.46 V597.64 L1200.26 595.66 Z" fill="#7a7a7a" stroke="#333" stroke-width="0.9" stroke-linejoin="round"/><path d="M1191.74 591.56 L1196.00 589.66 L1200.26 591.56 L1196.00 593.46 Z" fill="#959595" stroke="#333" stroke-width="0.9" stroke-linejoin="round"/><g stroke="#3a3a3a" stroke-width="0.8"><path d="M1223.9 585.8 L1231.2 589 V597 L1223.9 600.2 L1216.6 597 V589 Z" fill="#7e4745"/><path d="M1216.6 589 L1223.9 592.2 L1231.2 589 M1223.9 592.2 V600.2" fill="none"/></g><path d="M1244.7 593 Q1252 585 1259.3 593 Q1252 601 1244.7 593 Z" fill="#f0f0f0"/><circle cx="1252" cy="592.7" r="3.1" fill="#2a2a2a"/><circle cx="1251" cy="591.6" r="0.9" fill="#ddd"/><g fill="#4a4a4a"><circle cx="13.6" cy="955" r="1.3"/><circle cx="13.6" cy="961" r="1.3"/><circle cx="13.6" cy="967" r="1.3"/></g><path d="M97.40 964.1V969.8M107.79 964.1V969.8M118.18 964.1V969.8M128.57 964.1V969.8M138.96 959.5V969.8M149.35 964.1V969.8M159.74 964.1V969.8M170.13 964.1V969.8M180.52 964.1V969.8M190.91 955.2V969.8M201.30 964.1V969.8M211.69 964.1V969.8M222.08 964.1V969.8M232.47 964.1V969.8M242.86 959.5V969.8M253.25 964.1V969.8M263.64 964.1V969.8M274.03 964.1V969.8M284.42 964.1V969.8M294.81 955.2V969.8M305.20 964.1V969.8M315.59 964.1V969.8M325.98 964.1V969.8M336.37 964.1V969.8M346.76 959.5V969.8M357.15 964.1V969.8M367.54 964.1V969.8M377.93 964.1V969.8M388.32 964.1V969.8M398.71 955.2V969.8M409.10 964.1V969.8M419.49 964.1V969.8M429.88 964.1V969.8M440.27 964.1V969.8M450.66 959.5V969.8M461.05 964.1V969.8M471.44 964.1V969.8M481.83 964.1V969.8M492.22 964.1V969.8M502.61 955.2V969.8M513.00 964.1V969.8M523.39 964.1V969.8M533.78 964.1V969.8M544.17 964.1V969.8M554.56 959.5V969.8M564.95 964.1V969.8M575.34 964.1V969.8M585.73 964.1V969.8M596.12 964.1V969.8M606.51 955.2V969.8M616.90 964.1V969.8M627.29 964.1V969.8M637.68 964.1V969.8M648.07 964.1V969.8M658.46 959.5V969.8M668.85 964.1V969.8M679.24 964.1V969.8M689.63 964.1V969.8M700.02 964.1V969.8M710.41 955.2V969.8M720.80 964.1V969.8M731.19 964.1V969.8M741.58 964.1V969.8M751.97 964.1V969.8M762.36 959.5V969.8M772.75 964.1V969.8M783.14 964.1V969.8M793.53 964.1V969.8M803.92 964.1V969.8M814.31 955.2V969.8M824.70 964.1V969.8M835.09 964.1V969.8M845.48 964.1V969.8M855.87 964.1V969.8M866.26 959.5V969.8M876.65 964.1V969.8M887.04 964.1V969.8M897.43 964.1V969.8M907.82 964.1V969.8M918.21 955.2V969.8M928.60 964.1V969.8M938.99 964.1V969.8M949.38 964.1V969.8M959.77 964.1V969.8M970.16 959.5V969.8M980.55 964.1V969.8M990.94 964.1V969.8M1001.33 964.1V969.8M1011.72 964.1V969.8M1022.11 955.2V969.8M1032.50 964.1V969.8M1042.89 964.1V969.8M1053.28 964.1V969.8M1063.67 964.1V969.8M1074.06 959.5V969.8M1084.45 964.1V969.8M1094.84 964.1V969.8M1105.23 964.1V969.8M1115.62 964.1V969.8" stroke="#1e1e1e" stroke-width="2"/><g fill="#9a9a9a"><rect x="1119.7" y="954" width="1.6" height="12.7"/><path d="M1126 955.5 V965.5 L1121.5 960.5 Z"/><path d="M1131 955 L1140 960.5 L1131 966 L1133.5 960.5 Z"/><rect x="1151.4" y="954" width="1.6" height="12.7"/><path d="M1147 955.5 V965.5 L1151.5 960.5 Z"/></g></svg><div class="t" style="left:410.27px;top:711.34px;font-size:12px;line-height:15px;font-weight:bold;color:#e8e8e8;letter-spacing:0.3px;-webkit-text-stroke:0.25px #e8e8e8;transform:scaleX(0.9395);transform-origin:0 0;">SceneReader</div><div class="t" style="left:93.95px;top:955.49px;font-size:11px;line-height:14px;font-weight:normal;color:#e4d43a;letter-spacing:0.25px;-webkit-text-stroke:0.18px #e4d43a;transform:scaleX(0.8800);transform-origin:0 0;">1</div></body></html>
